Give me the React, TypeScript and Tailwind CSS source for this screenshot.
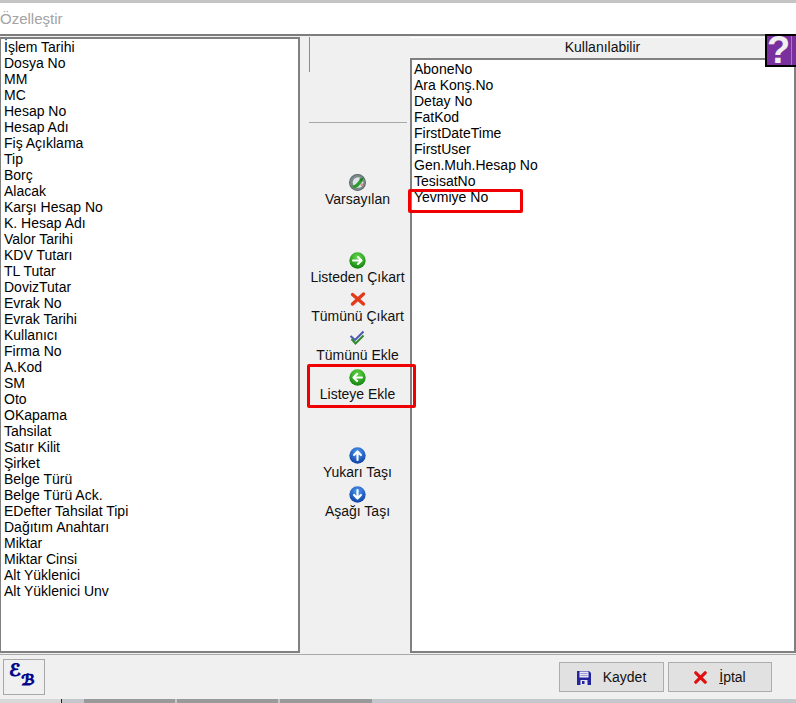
import type { ReactNode } from 'react'

const leftItems = [
  'İşlem Tarihi', 'Dosya No', 'MM', 'MC', 'Hesap No', 'Hesap Adı', 'Fiş Açıklama', 'Tip', 'Borç', 'Alacak',
  'Karşı Hesap No', 'K. Hesap Adı', 'Valor Tarihi', 'KDV Tutarı', 'TL Tutar', 'DovizTutar', 'Evrak No',
  'Evrak Tarihi', 'Kullanıcı', 'Firma No', 'A.Kod', 'SM', 'Oto', 'OKapama', 'Tahsilat', 'Satır Kilit', 'Şirket',
  'Belge Türü', 'Belge Türü Ack.', 'EDefter Tahsilat Tipi', 'Dağıtım Anahtarı', 'Miktar', 'Miktar Cinsi',
  'Alt Yüklenici', 'Alt Yüklenici Unv',
]

const rightItems = [
  'AboneNo', 'Ara Konş.No', 'Detay No', 'FatKod', 'FirstDateTime', 'FirstUser', 'Gen.Muh.Hesap No', 'TesisatNo', 'Yevmiye No',
]

function Ball({ from, to, children }: { from: string; to: string; children: ReactNode }) {
  return (
    <svg width="17" height="17" viewBox="0 0 16 16">
      <defs>
        <radialGradient id={from.slice(1)} cx="50%" cy="30%" r="75%">
          <stop offset="0%" stopColor={to} />
          <stop offset="100%" stopColor={from} />
        </radialGradient>
      </defs>
      <circle cx="8" cy="8" r="7.7" fill={`url(${from})`} />
      {children}
    </svg>
  )
}

const arrow = { fill: 'none', stroke: 'white', strokeWidth: 2, strokeLinecap: 'round' as const, strokeLinejoin: 'round' as const }

function Tool({ icon, label }: { icon: ReactNode; label: string }) {
  return (
    <div className="flex h-[39px] flex-col items-center">
      <div className="flex h-4 items-center">{icon}</div>
      <span className="mt-[1px] whitespace-nowrap leading-4">{label}</span>
    </div>
  )
}

function ListBox({ items, className }: { items: string[]; className: string }) {
  return (
    <ul className={`h-full bg-white leading-4 text-black ${className}`}>
      {items.map((item) => (
        <li key={item} className="h-4 whitespace-nowrap">{item}</li>
      ))}
    </ul>
  )
}

export default function App() {
  return (
    <div className="relative flex h-[703px] w-[796px] flex-col overflow-hidden bg-white font-['Liberation_Sans',Arial,sans-serif] text-[14px] text-[#111]">
      {/* Title */}
      <div className="h-[36px] border-t-[3px] border-b-2 border-t-[#c4c4c4] border-b-[#7d7d7d] bg-white pt-[6px] text-[15px] leading-5 text-[#a3a3a3]">
        Özelleştir
      </div>

      {/* Main */}
      <div className="flex h-[618px] bg-[#f0f0f0] pt-[1px] pb-[1px]">
        <div className="w-[300px] border-2 border-l border-[#808080] bg-white">
          <ListBox items={leftItems} className="pl-[3px]" />
        </div>

        <div className="w-[110px]">
          <div className="ml-[9px] h-[35px] w-px bg-[#8c8c8c]" />
          <div className="ml-[9px] mt-[50px] h-px w-[98px] bg-[#a8a8a8]" />
          <div className="flex flex-col items-center pl-[5px] pt-[51px]">
            <Tool label="Varsayılan" icon={
              <svg width="17" height="17" viewBox="0 0 16 16">
                <circle cx="8" cy="8" r="7.5" fill="#7d8a8c" stroke="#5f6a6b" />
                <circle cx="8.5" cy="8" r="5" fill="#dfe4ea" />
                <path d="M2.5 11 C6 11 8 8 11 4 L12.5 7 C10.5 10 8 13.5 4.5 13.5 Z" fill="#2f9a2f" />
                <path d="M9.5 4.5 L13.5 3.5 L12.5 7.5 Z" fill="#1f7d1f" />
                <circle cx="12" cy="10" r="1.2" fill="#d98a80" />
              </svg>
            } />
            <div className="h-[39px]" />
            <Tool label="Listeden Çıkart" icon={
              <Ball from="#0b7d0b" to="#66d94a"><path d="M3.8 8 H11.5 M8.4 4.8 L11.8 8 L8.4 11.2" {...arrow} /></Ball>
            } />
            <Tool label="Tümünü Çıkart" icon={
              <svg width="16" height="16" viewBox="0 0 16 16">
                <path d="M2.5 3.5 L13.5 13 M13.5 3 L2.5 13" stroke="#e33a1c" strokeWidth="3.4" strokeLinecap="round" />
              </svg>
            } />
            <Tool label="Tümünü Ekle" icon={
              <svg width="16" height="16" viewBox="0 0 16 16">
                <path d="M1.5 6 L6 10 L14.5 1.5" fill="none" stroke="#4a55b5" strokeWidth="2" />
                <path d="M2.5 9 L6.5 13.5 L14.5 5.5" fill="none" stroke="#2e8b2e" strokeWidth="2" />
              </svg>
            } />
            <Tool label="Listeye Ekle" icon={
              <Ball from="#0b7d0b" to="#66d94a"><path d="M12.2 8 H4.5 M7.6 4.8 L4.2 8 L7.6 11.2" {...arrow} /></Ball>
            } />
            <div className="h-[39px]" />
            <Tool label="Yukarı Taşı" icon={
              <Ball from="#0a3a9e" to="#4f9bf0"><path d="M8 12.2 V4.5 M4.8 7.6 L8 4.2 L11.2 7.6" {...arrow} /></Ball>
            } />
            <Tool label="Aşağı Taşı" icon={
              <Ball from="#0a3a9e" to="#4f9bf0"><path d="M8 3.8 V11.5 M4.8 8.4 L8 11.8 L11.2 8.4" {...arrow} /></Ball>
            } />
          </div>
        </div>

        <div className="flex w-[386px] flex-col bg-white">
          <div className="mt-[1px] h-[22px] border-b-2 border-[#808080] bg-[#f0f0f0] pr-[1px] text-center leading-[19px]">
            Kullanılabilir
          </div>
          <div className="flex-1 border-x-2 border-b-2 border-[#808080]">
            <ListBox items={rightItems} className="pl-[2px] pt-[1px]" />
          </div>
        </div>
      </div>

      {/* Footer */}
      <div className="flex h-[45px] items-center justify-between border-t border-t-[#a8a8a8] bg-[#f0f0f0] pl-[3px] pr-6">
        <div className="flex h-[36px] w-[42px] items-center justify-center border border-[#a8a8a8]">
          <span className="relative block h-6 w-6 font-['DejaVu_Sans',serif] font-bold italic leading-none text-[#00008b] [-webkit-text-stroke:0.8px_#00008b]">
            <span className="absolute left-[-3px] top-[-3px] text-[17px]">ℰ</span>
            <span className="absolute left-[9px] top-[8px] text-[15px]">ℬ</span>
          </span>
        </div>
        <div className="flex gap-1">
          <button className="flex h-[30px] w-[105px] items-center justify-center gap-3 border border-[#adadad] bg-[#e1e1e1]">
            <svg width="14" height="15" viewBox="0 0 14 15">
              <path d="M0 1 H12 L14 3 V15 H0 Z" fill="#24249c" />
              <rect x="2.5" y="1.5" width="9" height="6" fill="#e6e6f5" />
              <path d="M3.5 3.5 H10.5 M3.5 5.5 H10.5" stroke="#9a9ad0" />
              <rect x="3.5" y="10" width="7" height="5" fill="#e6e6f5" />
              <rect x="5" y="11" width="2.5" height="3" fill="#24249c" />
            </svg>
            Kaydet
          </button>
          <button className="flex h-[30px] w-[104px] items-center justify-center gap-3 border border-[#adadad] bg-[#e1e1e1]">
            <svg width="13" height="13" viewBox="0 0 13 13">
              <path d="M1.8 1.8 L11.2 11.2 M11.2 1.8 L1.8 11.2" stroke="#e01010" strokeWidth="3.2" strokeLinecap="round" />
            </svg>
            <span><span className="underline">İ</span>ptal</span>
          </button>
        </div>
      </div>

      {/* Bottom strip */}
      <div className="flex h-[4px] bg-[#c4c8cc]">
        <div className="w-[61px] bg-[#d8d8d8]" />
        <div className="w-px bg-[#222]" />
        <div className="w-[22px]" />
        <div className="w-[91px] bg-[#9a9a9a]" />
        <div className="ml-[2px] w-[101px] bg-[#9a9a9a]" />
        <div className="ml-[2px] w-[92px] bg-[#9a9a9a]" />
      </div>

      {/* Help badge */}
      <div className="absolute left-[765px] top-[34px] flex h-[33px] w-[31px] items-center border-2 border-r-0 border-black bg-[#7a2f9e]">
        <span className="text-[38px] font-bold leading-[29px] text-[#f0f0f0]">?</span>
        <span className="absolute left-[24px] top-0 h-full w-px bg-[#a777c0]" />
      </div>

      {/* Red annotations */}
      <div className="absolute left-[408px] top-[189px] h-[24px] w-[115px] rounded-[2px] border-[3px] border-[#f00000]" />
      <div className="absolute left-[307px] top-[364px] h-[44px] w-[109px] rounded-[2px] border-[3px] border-[#f00000]" />
    </div>
  )
}
